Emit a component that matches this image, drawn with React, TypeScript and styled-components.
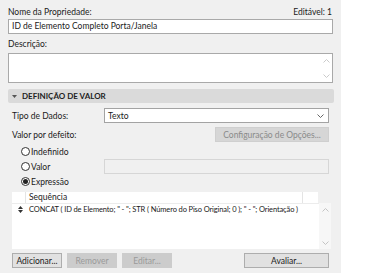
import styled, { createGlobalStyle } from "styled-components";

const GlobalStyle = createGlobalStyle`
  html, body {
    margin: 0;
    padding: 0;
    background: #ffffff;
  }
  body {
    font-family: Lato, "Noto Sans", sans-serif;
    font-size: 8.5px;
    color: #1a1a1a;
  }
`;

const Chevron = ({ up, color = "#9a9a9a" }: { up?: boolean; color?: string }) => (
  <svg width="7" height="4" viewBox="0 0 7 4">
    <path
      d={up ? "M0.5 3.5 L3.5 0.5 L6.5 3.5" : "M0.5 0.5 L3.5 3.5 L6.5 0.5"}
      fill="none"
      stroke={color}
      strokeWidth="0.9"
    />
  </svg>
);

const App = () => {
  return (
    <>
      <GlobalStyle />
      <Panel>
        <LabelRow>
          <span>Nome da Propriedade:</span>
          <span>Editável: 1</span>
        </LabelRow>
        <TextField>ID de Elemento Completo Porta/Janela</TextField>
        <Label>Descrição:</Label>
        <TextArea>
          <ScrollArrows>
            <Chevron up color="#c4c4c4" />
            <Chevron color="#c4c4c4" />
          </ScrollArrows>
        </TextArea>

        <SectionHeader>
          <svg width="5" height="3" viewBox="0 0 5 3">
            <path d="M0 0 L5 0 L2.5 3 Z" fill="#555" />
          </svg>
          <span>DEFINIÇÃO DE VALOR</span>
        </SectionHeader>

        <Section>
          <FieldRow>
            <FieldLabel>Tipo de Dados:</FieldLabel>
            <Select>
              <span>Texto</span>
              <Chevron color="#555" />
            </Select>
          </FieldRow>
          <FieldRow $gap={2}>
            <FieldLabel>Valor por defeito:</FieldLabel>
            <OptionsButton>Configuração de Opções...</OptionsButton>
          </FieldRow>
          <RadioRow>
            <Radio />
            <span>Indefinido</span>
          </RadioRow>
          <FieldRow $gap={0}>
            <RadioRow>
              <Radio />
              <span>Valor</span>
            </RadioRow>
            <DisabledField />
          </FieldRow>
          <RadioRow>
            <Radio $checked />
            <span>Expressão</span>
          </RadioRow>

          <Table>
            <TableHead>
              <HeadCell $w={13} />
              <HeadCell $grow>Sequência</HeadCell>
              <HeadCell $w={15} $last />
            </TableHead>
            <TableBody>
              <Rows>
                <Row>
                  <Handle>
                    <svg width="5" height="7" viewBox="0 0 5 7">
                      <path d="M0 3 L2.5 0 L5 3 Z M0 4 L5 4 L2.5 7 Z" fill="#333" />
                    </svg>
                  </Handle>
                  <Expr>
                    CONCAT ( ID de Elemento; " - "; STR ( Número do Piso Original; 0 ); " - "; Orientação )
                  </Expr>
                </Row>
              </Rows>
              <TableScroll>
                <Chevron up color="#bdbdbd" />
                <Chevron color="#bdbdbd" />
              </TableScroll>
            </TableBody>
          </Table>

          <ButtonBar>
            <Button>Adicionar...</Button>
            <Button $disabled>Remover</Button>
            <Button $disabled>Editar...</Button>
            <Spacer />
            <Button $wide>Avaliar...</Button>
          </ButtonBar>
        </Section>
      </Panel>
    </>
  );
};

const Panel = styled.div`
  width: 341px;
  height: 273px;
  box-sizing: border-box;
  background: #f0f0f0;
  padding: 6px 8px 0 8px;
  display: flex;
  flex-direction: column;
`;

const LabelRow = styled.div`
  display: flex;
  justify-content: space-between;
  height: 12px;
  line-height: 12px;
  padding-right: 1px;
`;

const Label = styled.div`
  height: 12px;
  line-height: 12px;
  margin-top: 4px;
  margin-bottom: 3px;
`;

const TextField = styled.div`
  box-sizing: border-box;
  height: 15px;
  margin-top: 1px;
  border: 1px solid #a9a9a9;
  background: #fff;
  padding: 0 3px;
  line-height: 13px;
`;

const TextArea = styled.div`
  box-sizing: border-box;
  height: 30px;
  border: 1px solid #a9a9a9;
  background: #fff;
  display: flex;
  justify-content: flex-end;
`;

const ScrollArrows = styled.div`
  width: 11px;
  display: flex;
  flex-direction: column;
  justify-content: space-between;
  align-items: center;
  padding: 5px 0 4px;
`;

const SectionHeader = styled.div`
  margin-top: 6px;
  height: 14px;
  margin-right: -1px;
  border-radius: 2px;
  background: #dadada;
  display: flex;
  align-items: center;
  gap: 5px;
  padding-left: 4px;
  font-weight: 700;
  font-size: 8px;
  color: #222;
`;

const Section = styled.div`
  padding: 5px 4px 0 4px;
  display: flex;
  flex-direction: column;
`;

const FieldRow = styled.div<{ $gap?: number }>`
  display: grid;
  grid-template-columns: 92px 1fr;
  align-items: center;
  margin-bottom: ${(p) => p.$gap ?? 4}px;
`;

const FieldLabel = styled.span`
  line-height: 12px;
`;

const Select = styled.div`
  box-sizing: border-box;
  height: 15px;
  border: 1px solid #a3a3a3;
  background: #fff;
  display: flex;
  align-items: center;
  justify-content: space-between;
  padding: 0 4px 0 3px;
`;

const OptionsButton = styled.div`
  justify-self: end;
  width: 114px;
  height: 15px;
  box-sizing: border-box;
  background: #d6d6d6;
  border: 1px solid #cfcfcf;
  color: #8a8a8a;
  display: flex;
  align-items: center;
  justify-content: center;
`;

const RadioRow = styled.div`
  display: flex;
  align-items: center;
  gap: 1px;
  height: 15px;
  padding-left: 9px;
`;

const Radio = styled.span<{ $checked?: boolean }>`
  width: 9px;
  height: 9px;
  box-sizing: border-box;
  border-radius: 50%;
  border: 1px solid #333;
  background: #fff;
  display: flex;
  align-items: center;
  justify-content: center;
  &::after {
    content: "";
    width: 5px;
    height: 5px;
    border-radius: 50%;
    background: ${(p) => (p.$checked ? "#222" : "transparent")};
  }
`;

const DisabledField = styled.div`
  height: 15px;
  box-sizing: border-box;
  border: 1px solid #d6d6d6;
  background: #f0f0f0;
`;

const Table = styled.div`
  margin-top: 3px;
  width: 319px;
  display: flex;
  flex-direction: column;
`;

const TableHead = styled.div`
  display: flex;
  height: 11px;
  background: #fff;
  width: 306px;
`;

const HeadCell = styled.div<{ $w?: number; $grow?: boolean; $last?: boolean }>`
  width: ${(p) => (p.$w ? `${p.$w}px` : "auto")};
  flex: ${(p) => (p.$grow ? 1 : "none")};
  border-right: ${(p) => (p.$last ? "none" : "1px solid #e4e4e4")};
  line-height: 11px;
  padding-left: ${(p) => (p.$grow ? "3px" : "0")};
`;

const TableBody = styled.div`
  display: flex;
  height: 46px;
`;

const Rows = styled.div`
  width: 307px;
  background: #fff;
  border-top: 1px solid #ececec;
`;

const Row = styled.div`
  display: flex;
  align-items: center;
  height: 11px;
  white-space: nowrap;
`;

const Handle = styled.span`
  width: 17px;
  display: flex;
  justify-content: center;
  flex: none;
`;

const Expr = styled.span`
  font-size: 7.5px;
  letter-spacing: -0.12px;
`;

const TableScroll = styled.div`
  width: 12px;
  background: #f7f7f7;
  display: flex;
  flex-direction: column;
  justify-content: space-between;
  align-items: center;
  padding: 5px 0 4px;
`;

const ButtonBar = styled.div`
  margin-top: 4px;
  display: flex;
  gap: 5px;
`;

const Spacer = styled.div`
  flex: 1;
`;

const Button = styled.div<{ $disabled?: boolean; $wide?: boolean }>`
  width: ${(p) => (p.$wide ? 85 : 50)}px;
  height: 15px;
  box-sizing: border-box;
  border: 1px solid ${(p) => (p.$disabled ? "#cccccc" : "#adadad")};
  background: ${(p) => (p.$disabled ? "#cccccc" : "#e1e1e1")};
  color: ${(p) => (p.$disabled ? "#9a9a9a" : "#1a1a1a")};
  display: flex;
  align-items: center;
  justify-content: center;
`;

export default App;
